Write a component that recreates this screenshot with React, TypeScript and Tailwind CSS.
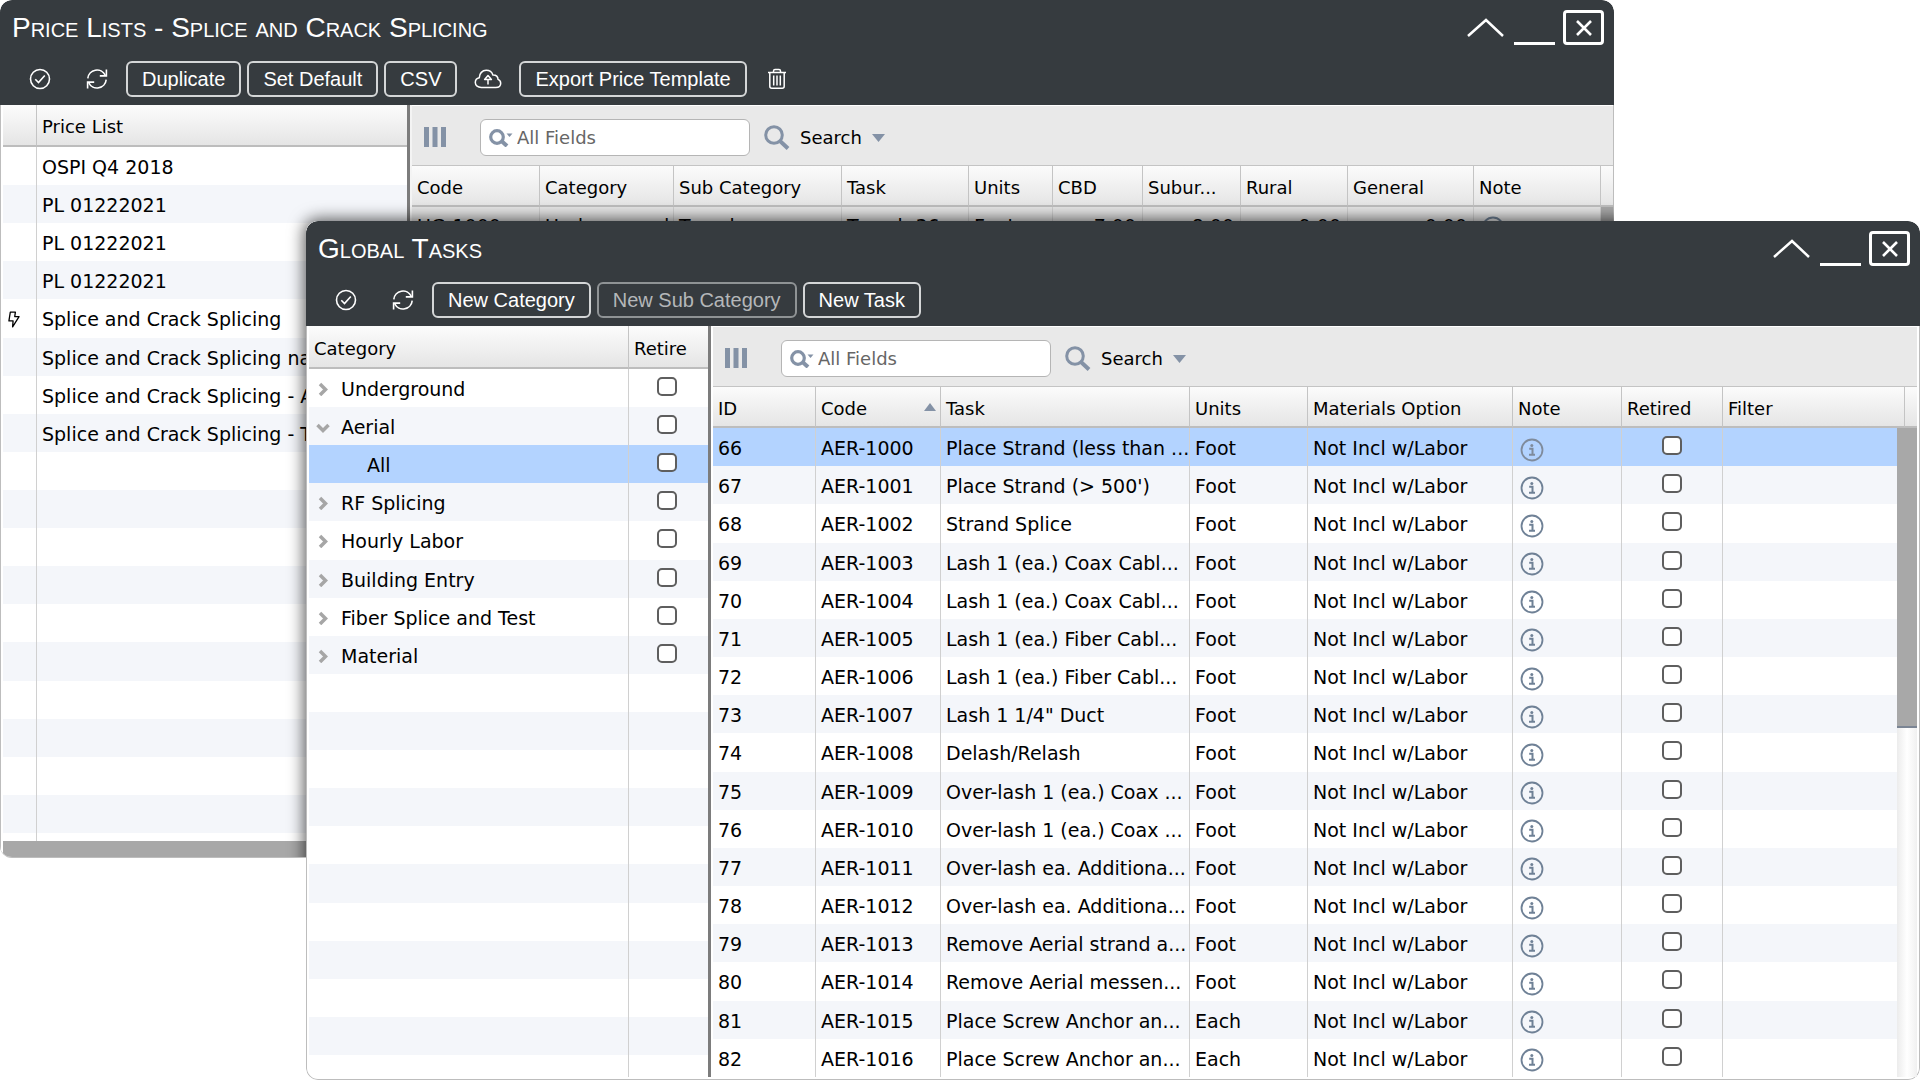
import type { ReactNode } from 'react';

const priceLists = [
  { name: 'OSPI Q4 2018' },
  { name: 'PL 01222021' },
  { name: 'PL 01222021' },
  { name: 'PL 01222021' },
  { name: 'Splice and Crack Splicing', active: true },
  { name: 'Splice and Crack Splicing na' },
  { name: 'Splice and Crack Splicing - A' },
  { name: 'Splice and Crack Splicing - T' },
];

const categories = [
  { name: 'Underground' },
  { name: 'Aerial', open: true },
  { name: 'All', child: true },
  { name: 'RF Splicing' },
  { name: 'Hourly Labor' },
  { name: 'Building Entry' },
  { name: 'Fiber Splice and Test' },
  { name: 'Material' },
];

const tasks = [
  { id: 66, code: 'AER-1000', task: 'Place Strand (less than ...', units: 'Foot' },
  { id: 67, code: 'AER-1001', task: "Place Strand (> 500')", units: 'Foot' },
  { id: 68, code: 'AER-1002', task: 'Strand Splice', units: 'Foot' },
  { id: 69, code: 'AER-1003', task: 'Lash 1 (ea.) Coax Cabl...', units: 'Foot' },
  { id: 70, code: 'AER-1004', task: 'Lash 1 (ea.) Coax Cabl...', units: 'Foot' },
  { id: 71, code: 'AER-1005', task: 'Lash 1 (ea.) Fiber Cabl...', units: 'Foot' },
  { id: 72, code: 'AER-1006', task: 'Lash 1 (ea.) Fiber Cabl...', units: 'Foot' },
  { id: 73, code: 'AER-1007', task: 'Lash 1 1/4" Duct', units: 'Foot' },
  { id: 74, code: 'AER-1008', task: 'Delash/Relash', units: 'Foot' },
  { id: 75, code: 'AER-1009', task: 'Over-lash 1 (ea.) Coax ...', units: 'Foot' },
  { id: 76, code: 'AER-1010', task: 'Over-lash 1 (ea.) Coax ...', units: 'Foot' },
  { id: 77, code: 'AER-1011', task: 'Over-lash ea. Additiona...', units: 'Foot' },
  { id: 78, code: 'AER-1012', task: 'Over-lash ea. Additiona...', units: 'Foot' },
  { id: 79, code: 'AER-1013', task: 'Remove Aerial strand a...', units: 'Foot' },
  { id: 80, code: 'AER-1014', task: 'Remove Aerial messen...', units: 'Foot' },
  { id: 81, code: 'AER-1015', task: 'Place Screw Anchor an...', units: 'Each' },
  { id: 82, code: 'AER-1016', task: 'Place Screw Anchor an...', units: 'Each' },
];

const LIST_ROWS = 18;
const blankRows = (used: number) => Array.from({ length: LIST_ROWS - used }, (_, i) => i);

/* ---------- icons ---------- */

const CheckIcon = () => (
  <svg width="22" height="22" viewBox="0 0 22 22" fill="none" stroke="currentColor" strokeWidth="1.6">
    <circle cx="11" cy="11" r="9.5" />
    <path d="M6.3 11.3l3.2 3.2 6.3-7" />
  </svg>
);

const RefreshIcon = () => (
  <svg width="22" height="22" viewBox="0 0 22 22" fill="none" stroke="currentColor" strokeWidth="1.6">
    <path d="M1.8 10.4a9.2 9.2 0 0 1 17.4-3.2M20.2 11.6a9.2 9.2 0 0 1-17.4 3.2" />
    <path d="M20.4 1.5v6.4h-6.6M1.6 20.5v-6.4h6.6" />
  </svg>
);

const CloudIcon = () => (
  <svg width="28" height="22" viewBox="0 0 28 22" fill="none" stroke="currentColor" strokeWidth="1.5" strokeLinejoin="round">
    <path d="M7.2 19.5C4 19.5 1.3 17.6 1.3 14.6c0-2.4 1.6-4.3 4-4.8C5.3 5.3 8.4 2.3 12.2 2.3c3.2 0 5.8 1.8 6.7 4.6 3.3-.2 5.2 1.9 5.1 4.5 1.7.7 2.7 2 2.7 3.8 0 2.6-2.1 4.3-4.9 4.3z" />
    <path d="M14 16.5v-5M10.6 11.4l3.4-3.8 3.4 3.8z" />
  </svg>
);

const TrashIcon = () => (
  <svg width="20" height="22" viewBox="0 0 20 22" fill="none" stroke="currentColor" strokeWidth="1.5">
    <path d="M1 4.5h18M6.5 4.3V3A1.5 1.5 0 0 1 8 1.6h4A1.5 1.5 0 0 1 13.5 3v1.3" />
    <path d="M2.8 4.5v13.7c0 1.3.8 2 2 2h10.4c1.2 0 2-.7 2-2V4.5M6.7 7.5v10M10 7.5v10M13.3 7.5v10" />
  </svg>
);

const BoltIcon = () => (
  <svg width="12" height="17" viewBox="0 0 13 18" fill="none" stroke="currentColor" strokeWidth="1.4" strokeLinejoin="round">
    <path d="M2.500 1h5.500L7.300 5.800H12L5 17l.5-6.500H1z" />
  </svg>
);

const InfoIcon = ({ muted }: { muted?: boolean }) => (
  <svg width="24" height="24" viewBox="0 0 24 24" className={muted ? 'mt-[3px] ml-0.5 text-[#7f8b9c]' : 'mt-[3px] ml-0.5 text-[#6f8196]'}>
    <circle cx="12" cy="12" r="10.5" fill="none" stroke="currentColor" strokeWidth="1.8" />
    <circle cx="11.8" cy="7.5" r="1.5" fill="currentColor" />
    <path d="M9.2 10.8h3.3v6M9 16.8h6" fill="none" stroke="currentColor" strokeWidth="2" />
  </svg>
);

const ColumnsIcon = () => (
  <svg width="22" height="20" viewBox="0 0 22 20" fill="#8492a6">
    <path d="M0 0h5v20H0zM8.5 0h5v20h-5zM17 0h5v20h-5z" />
  </svg>
);

const Magnifier = () => (
  <svg width="26" height="26" viewBox="0 0 26 26" fill="none" stroke="#8492a6">
    <circle cx="10" cy="10" r="8.3" strokeWidth="3" />
    <path d="M16 16l8 7.5" strokeWidth="4" />
  </svg>
);

const FieldMagnifier = () => (
  <svg width="24" height="18" viewBox="0 0 24 18" fill="none" stroke="#8492a6">
    <circle cx="8" cy="8" r="6.3" strokeWidth="3.2" />
    <path d="M12.5 12l5.5 5" strokeWidth="4" />
    <path d="M17.5 4.5h6l-3 3.5z" fill="#8492a6" stroke="none" />
  </svg>
);

const Chevron = ({ open }: { open?: boolean }) => (
  <svg width="14" height="14" viewBox="0 0 14 14" fill="none" stroke="#a6a6a6" strokeWidth="3.5">
    <path d={open ? 'M1.5 5L7 10.5 12.5 5' : 'M4 2l5.5 5.5L4 13'} />
  </svg>
);

/* ---------- window frame ---------- */

function ToolButton({ children, disabled }: { children: ReactNode; disabled?: boolean }) {
  return (
    <button
      type="button"
      disabled={disabled}
      className="h-9 rounded-md border-2 border-[#d4d6d7] px-[14px] text-xl leading-none whitespace-nowrap text-white disabled:border-[#8f9395] disabled:text-[#b4b7b9]"
    >
      {children}
    </button>
  );
}

function IconButton({ label, children, className }: { label: string; children: ReactNode; className: string }) {
  return (
    <button type="button" aria-label={label} className={`flex justify-center ${className}`}>
      {children}
    </button>
  );
}

function TitleBar({ title, children }: { title: string; children: ReactNode }) {
  return (
    <header className="h-[105px] rounded-t-xl bg-[#363b3f] font-['Liberation_Sans',Arial,sans-serif] text-white">
      <div className="flex items-start justify-between pt-2.5 pr-2.5 pl-3">
        <h1 className="text-[28px] leading-9 [font-variant:small-caps]">{title}</h1>
        <div className="flex h-9 gap-2 pb-px">
          <button type="button" aria-label="Collapse">
            <svg width="40" height="35" viewBox="0 0 40 35" fill="none" stroke="currentColor" strokeWidth="2.5">
              <path d="M2 26L20 10l17 16" />
            </svg>
          </button>
          <button type="button" aria-label="Minimize" className="w-[41px] border-b-3 border-white" />
          <button type="button" aria-label="Close" className="flex w-[41px] items-center justify-center rounded border-3 border-white">
            <svg width="18" height="18" viewBox="0 0 18 18" fill="none" stroke="currentColor" strokeWidth="2.6">
              <path d="M2 2l14 14M16 2L2 16" />
            </svg>
          </button>
        </div>
      </div>
      <div className="flex items-center gap-1.5 pt-[15px] pl-3">{children}</div>
    </header>
  );
}

function SearchBar() {
  return (
    <div className="flex h-[60px] items-center border-t border-white bg-[#e9e9e9] pt-1 pl-3">
      <button type="button" aria-label="Columns" className="pb-0.5">
        <ColumnsIcon />
      </button>
      <label className="ml-[34px] flex h-[37px] w-[270px] items-center gap-1 rounded-md border border-[#b5b5b5] bg-white pl-2">
        <span className="shrink-0">
          <FieldMagnifier />
        </span>
        <input
          type="text"
          aria-label="All Fields"
          placeholder="All Fields"
          className="w-full min-w-0 bg-transparent outline-none placeholder:text-[#666]"
        />
      </label>
      <button type="button" className="ml-[14px] flex items-center gap-2.5">
        <Magnifier />
        Search
        <svg width="13" height="8" viewBox="0 0 13 8" fill="#8492a6">
          <path d="M0 0h13L6.5 8z" />
        </svg>
      </button>
    </div>
  );
}

/* ---------- table pieces ---------- */

function Th({ children, className = 'h-[43px]' }: { children?: ReactNode; className?: string }) {
  return (
    <th
      className={`truncate border-r border-b-2 border-r-[#c4c4c4] border-b-[#bdbdbd] pt-1 pr-1 pl-[5px] text-left text-lg font-normal last:border-r-0 ${className}`}
    >
      {children}
    </th>
  );
}

function Td({ children, className = '' }: { children?: ReactNode; className?: string }) {
  return (
    <td className={`overflow-hidden border-r border-[#d0d0d0] pt-0.5 pr-0.5 pb-0 pl-[5px] whitespace-nowrap last:border-r-0 ${className}`}>
      {children}
    </td>
  );
}

function Tick({ label }: { label: string }) {
  return (
    <input
      type="checkbox"
      aria-label={label}
      className="mb-[5px] block h-[19px] w-5 appearance-none rounded-[5px] border-2 border-[#5e5e5e] bg-white"
    />
  );
}

const tableBase = 'w-full table-fixed border-separate border-spacing-0 text-[19px]';
const headRow = 'bg-linear-to-b from-[#fcfcfc] to-[#e4e4e4]';
const gridHead = 'h-[42px] border-t border-t-[#c4c4c4]';

function PriceListPanel() {
  return (
    <section className="w-[404px] shrink-0">
      <table className={`${tableBase} h-[736px]`}>
        <colgroup>
          <col className="w-[34px]" />
          <col />
        </colgroup>
        <thead>
          <tr className={headRow}>
            <Th className="h-[42px]" />
            <Th className="h-[42px]">Price List</Th>
          </tr>
        </thead>
        <tbody>
          {priceLists.map((item, i) => (
            <tr key={i} className="even:bg-[#f4f6fa]">
              <Td>{item.active && <BoltIcon />}</Td>
              <Td>{item.name}</Td>
            </tr>
          ))}
          {blankRows(priceLists.length).map((i) => (
            <tr key={i} className="even:bg-[#f4f6fa]">
              <Td>&nbsp;</Td>
              <Td />
            </tr>
          ))}
          <tr>
            <Td className="h-2" />
            <Td />
          </tr>
        </tbody>
      </table>
      <div className="h-4 bg-[#a8a8a8]" />
    </section>
  );
}

function PriceTable() {
  return (
    <table className={`${tableBase} bg-white`}>
      <colgroup>
        <col className="w-[128px]" />
        <col className="w-[134px]" />
        <col className="w-[168px]" />
        <col className="w-[127px]" />
        <col className="w-[84px]" />
        <col className="w-[90px]" />
        <col className="w-[98px]" />
        <col className="w-[107px]" />
        <col className="w-[126px]" />
        <col />
        <col className="w-3" />
      </colgroup>
      <thead>
        <tr className={headRow}>
          <Th className={gridHead}>Code</Th>
          <Th className={gridHead}>Category</Th>
          <Th className={gridHead}>Sub Category</Th>
          <Th className={gridHead}>Task</Th>
          <Th className={gridHead}>Units</Th>
          <Th className={gridHead}>CBD</Th>
          <Th className={gridHead}>Subur...</Th>
          <Th className={gridHead}>Rural</Th>
          <Th className={gridHead}>General</Th>
          <Th className={gridHead}>Note</Th>
          <Th className={gridHead} />
        </tr>
      </thead>
      <tbody>
        <tr className="h-9 bg-[#e6e6e6]">
          <Td>UG-1000</Td>
          <Td>Underground</Td>
          <Td>Trench</Td>
          <Td>Trench 36</Td>
          <Td>Foot</Td>
          <Td>
            <div className="pr-1 text-right">7.00</div>
          </Td>
          <Td>
            <div className="pr-1 text-right">8.00</div>
          </Td>
          <Td>
            <div className="pr-1 text-right">9.00</div>
          </Td>
          <Td>
            <div className="pr-1 text-right">0.00</div>
          </Td>
          <Td>
            <InfoIcon />
          </Td>
          <td className="bg-[#a8a8a8]" />
        </tr>
      </tbody>
    </table>
  );
}

function CategoryPanel() {
  return (
    <section className="w-[399px] shrink-0">
      <table className={`${tableBase} h-[751px]`}>
        <colgroup>
          <col />
          <col className="w-[79px]" />
        </colgroup>
        <thead>
          <tr className={headRow}>
            <Th>Category</Th>
            <Th>Retire</Th>
          </tr>
        </thead>
        <tbody>
          {categories.map((item) => (
            <tr key={item.name} className={item.child ? 'bg-[#b3d3ff]' : 'even:bg-[#f4f6fa]'}>
              <Td>
                {item.child ? (
                  <span className="pl-[53px]">{item.name}</span>
                ) : (
                  <span className="flex items-center gap-[11px] pl-0.5">
                    <Chevron open={item.open} />
                    {item.name}
                  </span>
                )}
              </Td>
              <Td>
                <div className="flex justify-center pr-[7px]">
                  <Tick label={`Retire ${item.name}`} />
                </div>
              </Td>
            </tr>
          ))}
          {blankRows(categories.length).map((i) => (
            <tr key={i} className="even:bg-[#f4f6fa]">
              <Td>&nbsp;</Td>
              <Td />
            </tr>
          ))}
          <tr>
            <Td className="h-[22px]" />
            <Td />
          </tr>
        </tbody>
      </table>
    </section>
  );
}

function TaskTable() {
  return (
    <div className="relative">
      <table className={`${tableBase} h-[691px]`}>
        <colgroup>
          <col className="w-[103px]" />
          <col className="w-[125px]" />
          <col className="w-[249px]" />
          <col className="w-[118px]" />
          <col className="w-[205px]" />
          <col className="w-[109px]" />
          <col className="w-[101px]" />
          <col />
          <col className="w-3" />
        </colgroup>
        <thead>
          <tr className={headRow}>
            <Th className={gridHead}>ID</Th>
            <Th className={gridHead}>
              <span className="flex items-center justify-between">
                Code
                <svg width="12" height="12" viewBox="0 0 12 12" fill="#8492a6">
                  <path d="M0 8h12L6 0z" />
                </svg>
              </span>
            </Th>
            <Th className={gridHead}>Task</Th>
            <Th className={gridHead}>Units</Th>
            <Th className={gridHead}>Materials Option</Th>
            <Th className={gridHead}>Note</Th>
            <Th className={gridHead}>Retired</Th>
            <Th className={gridHead}>Filter</Th>
            <Th className={gridHead} />
          </tr>
        </thead>
        <tbody>
          {tasks.map((row, i) => (
            <tr key={row.id} className={i === 0 ? 'bg-[#b3d3ff]' : 'even:bg-[#f4f6fa]'}>
              <Td>{row.id}</Td>
              <Td>{row.code}</Td>
              <Td>{row.task}</Td>
              <Td>{row.units}</Td>
              <Td>Not Incl w/Labor</Td>
              <Td>
                <InfoIcon muted={i === 0} />
              </Td>
              <Td>
                <div className="flex justify-center pr-[3px]">
                  <Tick label={`Retired ${row.code}`} />
                </div>
              </Td>
              <td colSpan={2} />
            </tr>
          ))}
        </tbody>
      </table>
      <div className="absolute top-[42px] right-0 bottom-0 w-5 bg-linear-to-r from-[#ececec] via-white to-[#f0f0f0]">
        <div className="h-[300px] border-b-2 border-[#7b8594] bg-[#a8a8a8]" />
      </div>
    </div>
  );
}

export default function App() {
  return (
    <main className="relative min-h-screen bg-white font-['DejaVu_Sans',Verdana,sans-serif] text-lg leading-7 text-black">
      <div className="relative mr-[306px] overflow-hidden rounded-xl border-b border-[#bdbdbd]">
        <TitleBar title="Price Lists - Splice and Crack Splicing">
          <IconButton label="Apply" className="w-14">
            <CheckIcon />
          </IconButton>
          <IconButton label="Refresh" className="w-[46px]">
            <RefreshIcon />
          </IconButton>
          <ToolButton>Duplicate</ToolButton>
          <ToolButton>Set Default</ToolButton>
          <ToolButton>CSV</ToolButton>
          <IconButton label="Upload" className="w-[50px]">
            <CloudIcon />
          </IconButton>
          <ToolButton>Export Price Template</ToolButton>
          <IconButton label="Delete" className="w-12">
            <TrashIcon />
          </IconButton>
        </TitleBar>
        <div className="flex border-x border-[#bdbdbd] pl-0.5">
          <PriceListPanel />
          <div className="min-w-0 flex-1 border-l-3 border-[#7c7c7c] bg-[#f4f4f4] pl-0.5">
            <SearchBar />
            <PriceTable />
          </div>
        </div>
        {/* the front window only casts its shadow on the window behind it */}
        <div className="absolute top-[221px] -right-[306px] -bottom-[222px] left-[306px] rounded-xl shadow-[0_0_16px_2px_rgba(0,0,0,0.65)]" />
      </div>

      <div className="absolute top-[221px] right-0 left-[306px] overflow-hidden rounded-xl bg-white">
        <TitleBar title="Global Tasks">
          <IconButton label="Apply" className="w-14">
            <CheckIcon />
          </IconButton>
          <IconButton label="Refresh" className="w-[46px]">
            <RefreshIcon />
          </IconButton>
          <ToolButton>New Category</ToolButton>
          <ToolButton disabled>New Sub Category</ToolButton>
          <ToolButton>New Task</ToolButton>
        </TitleBar>
        <div className="flex rounded-b-xl border border-t-0 border-[#bdbdbd] px-0.5 pb-0.5">
          <CategoryPanel />
          <div className="min-w-0 flex-1 border-l-3 border-[#7c7c7c] pl-0.5">
            <SearchBar />
            <TaskTable />
          </div>
        </div>
      </div>
    </main>
  );
}
